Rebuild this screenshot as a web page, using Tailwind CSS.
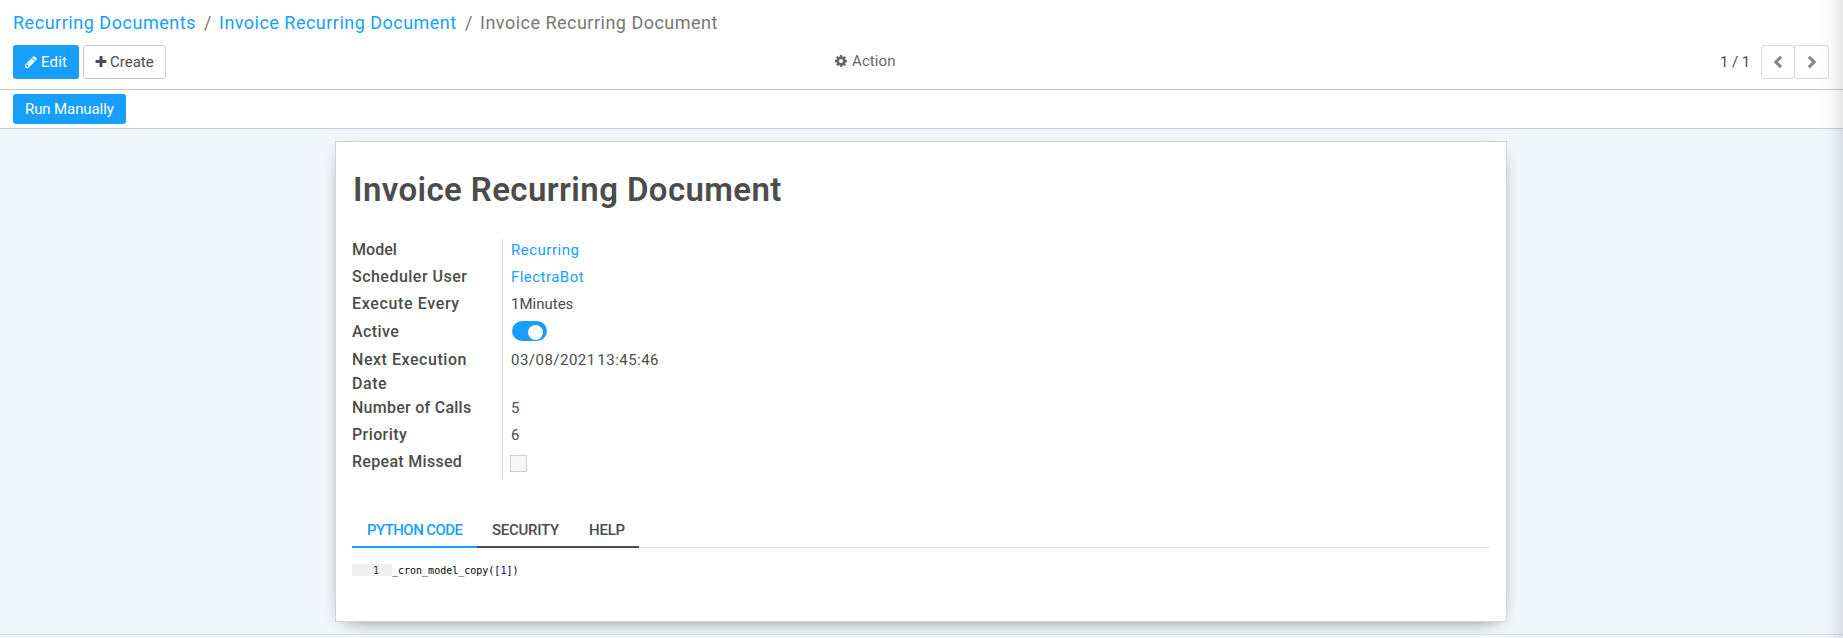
<!DOCTYPE html>
<html lang="en">
<head>
<meta charset="utf-8">
<title>Invoice Recurring Document</title>
<script src="https://cdn.jsdelivr.net/npm/@tailwindcss/browser@4"></script>
</head>
<body class="relative flex h-[638px] flex-col overflow-hidden bg-white font-['Roboto',sans-serif] text-[15px] text-[#4c4c4c]">
<header class="h-[90px] shrink-0 border-b border-[#c9c9cc] px-[13px] pt-[8px]">
  <nav class="flex h-[28px] items-center text-[18px] whitespace-nowrap text-[#777]">
    <a class="w-[191px] tracking-[0.53px] text-[#169fff]">Recurring Documents</a>
    <span class="w-[15px]">/</span>
    <a class="w-[246px] tracking-[0.48px] text-[#169fff]">Invoice Recurring Document</a>
    <span class="w-[15px]">/</span>
    <span class="tracking-[0.49px]">Invoice Recurring Document</span>
  </nav>
  <div class="mt-[9px] grid grid-cols-[821px_1fr_auto]">
    <div class="flex gap-1">
      <button class="flex h-[34px] w-[66px] items-center rounded-[3px] bg-[#169fff] pl-[11px] text-white">
        <svg class="mr-[3px] size-[14px]" viewBox="0 0 1792 1792" fill="currentColor"><path d="M491 1536l91-91-235-235-91 91v107h128v128h107zm523-928q0-22-22-22-10 0-17 7l-542 542q-7 7-7 17 0 22 22 22 10 0 17-7l542-542q7-7 7-17zm-54-192l416 416-832 832h-416v-416zm683 96q0 53-37 90l-166 166-416-416 166-165q36-38 90-38 53 0 91 38l235 234q37 39 37 91z"/></svg>
        <span class="tracking-[0.15px]">Edit</span>
      </button>
      <button class="flex h-[34px] w-[83px] items-center rounded-[3px] border border-[#c9c9cc] bg-white pl-[10px]">
        <svg class="mr-[2px] size-[14px]" viewBox="0 0 1792 1792" fill="currentColor"><path d="M1600 736v192q0 40-28 68t-68 28h-416v416q0 40-28 68t-68 28h-192q-40 0-68-28t-28-68v-416h-416q-40 0-68-28t-28-68v-192q0-40 28-68t68-28h416v-416q0-40 28-68t68-28h192q40 0 68 28t28 68v416h416q40 0 68 28t28 68z"/></svg>
        <span>Create</span>
      </button>
    </div>
    <div class="flex h-[32px] items-center text-[#666]">
      <svg class="mr-[4px] size-[14px]" viewBox="0 0 1792 1792" fill="currentColor"><path d="M1152 896q0-106-75-181t-181-75-181 75-75 181 75 181 181 75 181-75 75-181zm512-109v222q0 12-8 23t-20 13l-185 28q-19 54-39 91 35 50 107 138 10 12 10 25t-9 23q-27 37-99 108t-94 71q-12 0-26-9l-138-108q-44 23-91 38-16 136-29 186-7 28-36 28h-222q-14 0-24.5-8.5t-11.5-21.5l-28-184q-49-16-90-37l-141 107q-10 9-25 9-14 0-25-11-126-114-165-168-7-10-7-23 0-12 8-23 15-21 51-66.5t54-70.5q-27-50-41-99l-183-27q-13-2-21-12.5t-8-23.5v-222q0-12 8-23t19-13l186-28q14-46 39-92-40-57-107-138-10-12-10-24 0-10 9-23 26-36 98.5-107.5t94.5-71.5q13 0 26 10l138 107q44-23 91-38 16-136 29-186 7-28 36-28h222q14 0 24.5 8.5t11.5 21.5l28 184q49 16 90 37l142-107q9-9 24-9 13 0 25 10 129 119 165 170 7 8 7 22 0 12-8 23-15 21-51 66.5t-54 70.5q26 50 41 98l183 28q13 2 21 12.5t8 23.5z"/></svg>
      <span class="tracking-[0.1px]">Action</span>
    </div>
    <div class="flex items-center pr-[1px]">
      <span class="mr-[11px] tracking-[-0.1px]">1 / 1</span>
      <button class="flex h-[34px] w-[34px] items-center justify-center rounded-[3px] border border-[#dadadc] text-[#858585]">
        <svg class="h-[14px] w-[10px]" viewBox="0 0 10 14" fill="none" stroke="currentColor" stroke-width="3.1"><path d="M8.1 1.8L2.8 7l5.3 5.2"/></svg>
      </button>
      <button class="-ml-px flex h-[34px] w-[35px] items-center justify-center rounded-[3px] border border-[#dadadc] text-[#858585]">
        <svg class="h-[14px] w-[10px]" viewBox="0 0 10 14" fill="none" stroke="currentColor" stroke-width="3.1"><path d="M1.9 1.8L7.2 7l-5.3 5.2"/></svg>
      </button>
    </div>
  </div>
</header>
<div class="h-[39px] shrink-0 border-b border-[#cad1d8] pt-[4px] pl-[13px]">
  <button class="block h-[30px] w-[113px] rounded-[3px] bg-[#169fff] pl-[12px] text-left tracking-[-0.1px] text-white">Run Manually</button>
</div>
<main class="h-[506px] shrink-0 overflow-hidden border-b border-[#d8dbde] bg-[#f1f6fa] pt-[12px]">
  <section class="ml-[335px] h-[481px] w-[1172px] border border-[#d5d5d7] bg-white px-[16px] shadow-[0_5px_20px_-15px_#000,0_6px_16px_-4px_rgba(0,0,0,0.12)]">
    <h1 class="pt-[28px] pl-px text-[33px] leading-[40px] font-semibold tracking-[0.4px]">Invoice Recurring Document</h1>
    <div class="mt-[29px] grid h-[241px] grid-cols-[151px_1fr] text-[16px] leading-[24px]">
      <div class="border-r border-[#dcdcdc] font-medium">
        <div class="-mt-px h-[27px] tracking-[0.05px]">Model</div>
        <div class="h-[27px] tracking-[0.48px]">Scheduler User</div>
        <div class="h-[27px] tracking-[0.64px]">Execute Every</div>
        <div class="h-[29px] pt-px tracking-[0.4px]">Active</div>
        <div class="h-[48px] w-[130px] tracking-[0.54px]">Next Execution Date</div>
        <div class="h-[27px] tracking-[0.26px]">Number of Calls</div>
        <div class="h-[27px] tracking-[0.4px]">Priority</div>
        <div class="h-[27px] tracking-[0.3px]">Repeat Missed</div>
      </div>
      <div class="pl-[8px] text-[15px]">
        <div class="-mt-px h-[27px] tracking-[0.5px] text-[#169fff]">Recurring</div>
        <div class="h-[27px] tracking-[0.46px] text-[#169fff]">FlectraBot</div>
        <div class="h-[27px]">1Minutes</div>
        <div class="h-[29px] pt-[2px] pl-px"><div class="flex h-[20px] w-[35px] items-center justify-end rounded-full bg-[#169fff] pt-[2px] pr-[4px]"><div class="size-[15px] rounded-full bg-white"></div></div></div>
        <div class="h-[48px] tracking-[0.48px] [word-spacing:-2.5px]">03/08/2021 13:45:46</div>
        <div class="h-[27px]">5</div>
        <div class="h-[27px]">6</div>
        <div class="-ml-px pt-[5px]"><div class="size-[17px] border border-[#cfcfcf] bg-[#f6f6f6]"></div></div>
      </div>
    </div>
    <div class="mt-[33px] flex h-[35px] text-[15px] leading-[34px] font-medium">
      <div class="w-[125px] border-b-2 border-[#169fff] pl-[15px] tracking-[-0.57px] text-[#169fff]">PYTHON CODE</div>
      <div class="w-[97px] border-b-2 border-[#4c4c4c] pl-[15px] tracking-[-0.26px]">SECURITY</div>
      <div class="w-[65px] border-b-2 border-[#4c4c4c] pl-[15px] tracking-[-0.2px]">HELP</div>
      <div class="grow border-b border-[#dee0e2]"></div>
    </div>
    <div class="mt-[16px] flex h-[12px] font-['DejaVu_Sans_Mono',monospace] text-[10px] leading-[14px] text-black">
      <span class="w-[40px] bg-[#f0f0f0] pr-[13px] text-right text-[#333]">1</span>
      <span>_cron_model_copy([<span class="text-[#0000cd]">1</span>])</span>
    </div>
  </section>
</main>
<div class="grow bg-[#f4f7fa]"></div>
<div class="pointer-events-none absolute inset-y-0 right-0 w-[24px] bg-linear-to-r from-transparent via-black/2 to-black/10"></div>
</body>
</html>
